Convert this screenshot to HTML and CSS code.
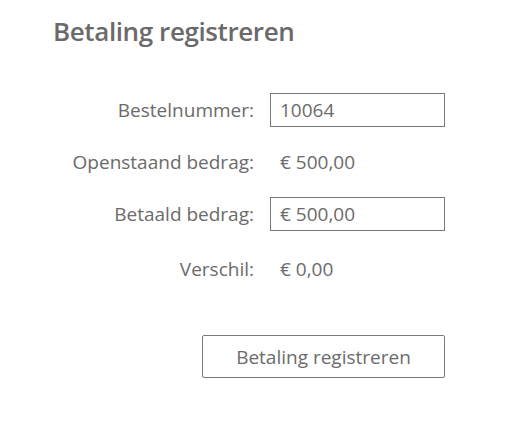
FILE: index.html
```html
<!DOCTYPE html>
<html lang="nl">
<head>
<meta charset="utf-8">
<link rel="stylesheet" href="styles.css">
</head>
<body>
<div class="page">
  <h1 class="title">Betaling registreren</h1>
  <div class="form">
    <label class="label">Bestelnummer:</label>
    <div class="input">10064</div>
    <div class="label">Openstaand bedrag:</div>
    <div class="value">€ 500,00</div>
    <label class="label">Betaald bedrag:</label>
    <div class="input">€ 500,00</div>
    <div class="label last">Verschil:</div>
    <div class="value last">€ 0,00</div>
  </div>
  <div class="actions">
    <button class="btn">Betaling registreren</button>
  </div>
</div>
</body>
</html>
```
FILE: styles.css
```css
html, body {
  margin: 0;
  padding: 0;
  background: #ffffff;
}
body {
  font-family: "Open Sans", "Noto Sans", sans-serif;
  color: #6b6b6b;
}
.page {
  width: 531px;
  height: 428px;
  box-sizing: border-box;
  padding: 12px 0 0 53px;
}
.title {
  margin: 0;
  font-size: 26px;
  font-weight: 600;
  line-height: 38px;
  color: #6a6a6a;
  letter-spacing: -0.4px;
}
.form {
  display: grid;
  grid-template-columns: 201px 175px;
  column-gap: 16px;
  grid-auto-rows: 34px;
  row-gap: 18px;
  margin-top: 43px;
}
.label {
  font-size: 19px;
  text-align: right;
  align-self: center;
  line-height: 24px;
}
.input {
  box-sizing: border-box;
  border: 1px solid #7a7a7a;
  height: 34px;
  padding: 0 9px;
  font-size: 19px;
  line-height: 32px;
}
.value {
  align-self: center;
  padding-left: 10px;
  font-size: 19px;
  line-height: 24px;
}
.last {
  margin-top: 6px;
}
.actions {
  display: flex;
  justify-content: flex-start;
  margin-top: 52px;
  padding-left: 149px;
}
.btn {
  width: 243px;
  height: 43px;
  border: 1px solid #7a7a7a;
  border-radius: 2px;
  background: #ffffff;
  font-family: inherit;
  font-size: 19px;
  color: #6b6b6b;
  padding: 0;
}
```
